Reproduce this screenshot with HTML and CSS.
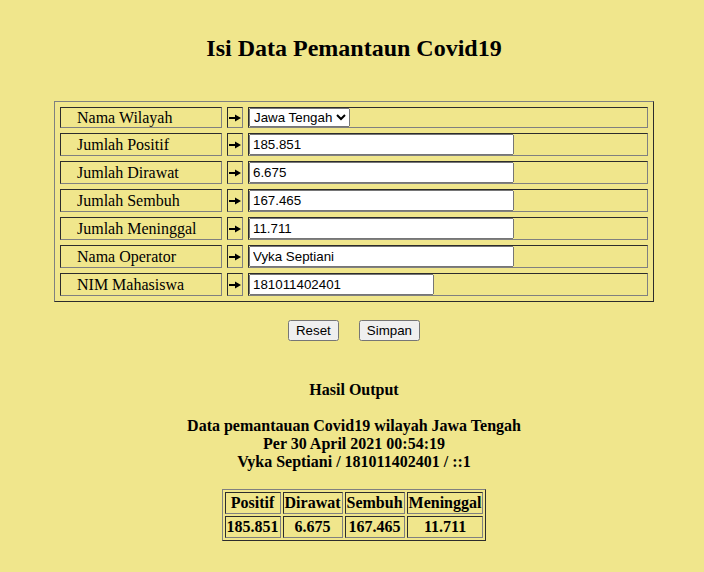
FILE: index.html
```html
<!DOCTYPE html>
<html>
<head>
<meta charset="utf-8">
<title>Isi Data Pemantaun Covid19</title>
<link rel="stylesheet" href="styles.css">
</head>
<body>
<h2 class="title">Isi Data Pemantaun Covid19</h2>
<form class="form">
<table class="form-table">
<tr>
<td class="label">Nama Wilayah</td>
<td class="arrow"><svg class="arr" width="12" height="8" viewBox="0 0 12 8"><path d="M0 3.1h7v1.8H0z M6 0.6 L12 4 L6 7.4z" fill="#000"/></svg></td>
<td class="field"><select class="sel">
<option>Jawa Barat</option>
<option selected>Jawa Tengah</option>
<option>Jawa Timur</option>
<option>DKI Jakarta</option>
</select></td>
</tr>
<tr>
<td class="label">Jumlah Positif</td>
<td class="arrow"><svg class="arr" width="12" height="8" viewBox="0 0 12 8"><path d="M0 3.1h7v1.8H0z M6 0.6 L12 4 L6 7.4z" fill="#000"/></svg></td>
<td class="field"><input class="inp" type="text" value="185.851"></td>
</tr>
<tr>
<td class="label">Jumlah Dirawat</td>
<td class="arrow"><svg class="arr" width="12" height="8" viewBox="0 0 12 8"><path d="M0 3.1h7v1.8H0z M6 0.6 L12 4 L6 7.4z" fill="#000"/></svg></td>
<td class="field"><input class="inp" type="text" value="6.675"></td>
</tr>
<tr>
<td class="label">Jumlah Sembuh</td>
<td class="arrow"><svg class="arr" width="12" height="8" viewBox="0 0 12 8"><path d="M0 3.1h7v1.8H0z M6 0.6 L12 4 L6 7.4z" fill="#000"/></svg></td>
<td class="field"><input class="inp" type="text" value="167.465"></td>
</tr>
<tr>
<td class="label">Jumlah Meninggal</td>
<td class="arrow"><svg class="arr" width="12" height="8" viewBox="0 0 12 8"><path d="M0 3.1h7v1.8H0z M6 0.6 L12 4 L6 7.4z" fill="#000"/></svg></td>
<td class="field"><input class="inp" type="text" value="11.711"></td>
</tr>
<tr>
<td class="label">Nama Operator</td>
<td class="arrow"><svg class="arr" width="12" height="8" viewBox="0 0 12 8"><path d="M0 3.1h7v1.8H0z M6 0.6 L12 4 L6 7.4z" fill="#000"/></svg></td>
<td class="field"><input class="inp" type="text" value="Vyka Septiani"></td>
</tr>
<tr>
<td class="label">NIM Mahasiswa</td>
<td class="arrow"><svg class="arr" width="12" height="8" viewBox="0 0 12 8"><path d="M0 3.1h7v1.8H0z M6 0.6 L12 4 L6 7.4z" fill="#000"/></svg></td>
<td class="field"><input class="inp inp-short" type="text" value="181011402401"></td>
</tr>
</table>
<div class="buttons">
<input class="btn" type="reset" value="Reset">
<input class="btn" type="button" value="Simpan">
</div>
</form>
<div class="output">
<p class="out-title">Hasil Output</p>
<p class="out-info">Data pemantauan Covid19 wilayah Jawa Tengah<br>Per 30 April 2021 00:54:19<br>Vyka Septiani / 181011402401 / ::1</p>
<table class="out-table">
<tr>
<td class="cell">Positif</td>
<td class="cell">Dirawat</td>
<td class="cell">Sembuh</td>
<td class="cell">Meninggal</td>
</tr>
<tr>
<td class="cell">185.851</td>
<td class="cell">6.675</td>
<td class="cell">167.465</td>
<td class="cell">11.711</td>
</tr>
</table>
</div>
</body>
</html>
```
FILE: styles.css
```css
html {
  background: #F0E68C;
}
body {
  margin: 0 6px 0 10px;
  padding: 1px 0 0 0;
  font-family: "Liberation Serif", "Times New Roman", serif;
  font-size: 16px;
  color: #000;
  background: #F0E68C;
}
.title {
  margin: 34px 0 39px 0;
  font-size: 24px;
  font-weight: bold;
  text-align: center;
}
.form {
  margin: 0;
}
.form-table {
  width: 600px;
  margin: 0 auto;
  border: 1px outset gray;
  border-spacing: 5px;
}
.form-table td {
  border: 1px inset gray;
  padding: 0;
}
.label {
  width: 144px;
  padding: 0 0 0 16px !important;
  white-space: nowrap;
}
.arrow {
  width: 14px;
  text-align: center;
  line-height: 0;
}
.arr {
  display: inline-block;
  vertical-align: middle;
}
.sel {
  margin: 0;
}
.inp {
  width: 265px;
  box-sizing: border-box;
  margin: 0;
}
.inp-short {
  width: 185px;
}
.buttons {
  display: flex;
  justify-content: center;
  gap: 20px;
  margin-top: 18px;
}
.btn {
  margin: 0;
}
.output {
  text-align: center;
  font-weight: bold;
}
.out-title {
  margin: 40px 0 18px 0;
}
.out-info {
  margin: 0 0 18px 0;
}
.out-table {
  margin: 0 auto;
  border: 1px outset gray;
  border-spacing: 2px;
}
.cell {
  border: 1px inset gray;
  padding: 1px;
  text-align: center;
}
```
